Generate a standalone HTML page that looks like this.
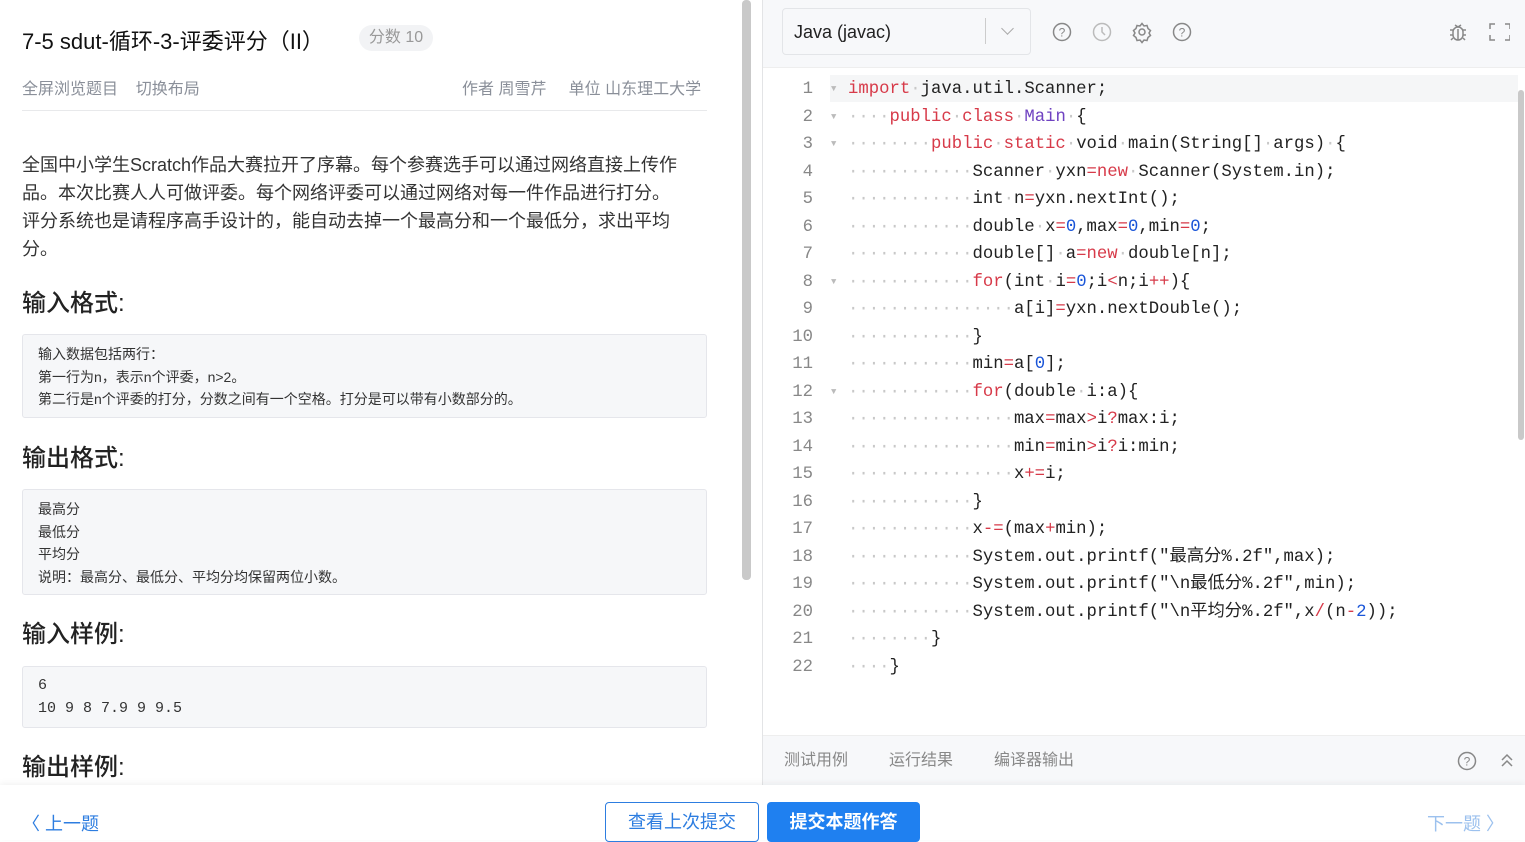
<!DOCTYPE html><html><head><meta charset="utf-8"><style>
*{margin:0;padding:0;box-sizing:border-box}
body{width:1525px;height:840px;overflow:hidden;font-family:"Liberation Sans","Noto Sans CJK SC",sans-serif;background:#fff;position:relative;color:#1f2329}
.abs{position:absolute}
.box{position:absolute;left:22px;width:685px;background:#f6f7f9;border:1px solid #e5e6eb;border-radius:3px;padding:8px 15px;font-size:14px;line-height:22.5px;color:#333}
h2{position:absolute;left:22px;font-size:24px;font-weight:500;color:#222}
.code{position:absolute;left:763px;top:76px;font-family:"Liberation Mono","Noto Sans CJK SC",monospace;font-size:17.3px}
.ln{position:absolute;width:50px;text-align:right;left:0;color:#888;height:27.5px;line-height:27.5px}
.cl{position:absolute;left:85px;white-space:pre;height:27.5px;line-height:27.5px;color:#222}
.d{color:#c8c8c8}.k{color:#d73a49}.m{color:#6f42c1}.n{color:#1a55d8}.o{color:#d73a49}
.ar{position:absolute;left:68px;color:#bbb;font-size:9px;line-height:27.5px}
</style></head><body>
<div class="abs" style="left:22px;top:24px;font-size:22px;color:#111">7-5 sdut-循环-3-评委评分（II）</div>
<div class="abs" style="left:359px;top:25px;width:74px;height:26px;border-radius:13px;background:#f2f3f5;color:#999;font-size:16px;line-height:26px;text-align:center">分数 10</div>
<div class="abs" style="left:22px;top:75px;font-size:16px;color:#8a8f99">全屏浏览题目&nbsp;&nbsp;&nbsp;&nbsp;切换布局</div>
<div class="abs" style="left:462px;top:75px;font-size:16px;color:#8a8f99">作者 周雪芹&nbsp;&nbsp;&nbsp;&nbsp;&nbsp;单位 山东理工大学</div>
<div class="abs" style="left:22px;top:110px;width:685px;height:1px;background:#e8e9eb"></div>
<div class="abs" style="left:22px;top:151px;width:700px;font-size:18px;line-height:28px;color:#333;white-space:nowrap">全国中小学生Scratch作品大赛拉开了序幕。每个参赛选手可以通过网络直接上传作<br>品。本次比赛人人可做评委。每个网络评委可以通过网络对每一件作品进行打分。<br>评分系统也是请程序高手设计的，能自动去掉一个最高分和一个最低分，求出平均<br>分。</div>
<h2 style="top:283px">输入格式:</h2>
<div class="box" style="top:334px;height:84px">输入数据包括两行：<br>第一行为n，表示n个评委，n&gt;2。<br>第二行是n个评委的打分，分数之间有一个空格。打分是可以带有小数部分的。</div>
<h2 style="top:438px">输出格式:</h2>
<div class="box" style="top:489px;height:106px">最高分<br>最低分<br>平均分<br>说明：最高分、最低分、平均分均保留两位小数。</div>
<h2 style="top:614px">输入样例:</h2>
<div class="box" style="top:666px;height:62px;font-family:'Liberation Mono',monospace;font-size:15px">6<br>10 9 8 7.9 9 9.5</div>
<h2 style="top:747px">输出样例:</h2>
<div class="abs" style="left:742px;top:0;width:9px;height:580px;background:#c9c9c9;border-radius:4px"></div>
<div class="abs" style="left:762px;top:0;width:1px;height:785px;background:#e3e4e6"></div>
<div class="abs" style="left:763px;top:0;width:762px;height:68px;background:#f7f8fa;border-bottom:1px solid #eee"></div>
<div class="abs" style="left:782px;top:8px;width:249px;height:47px;border:1px solid #e3e5e8;border-radius:4px;background:#f7f8fa;font-size:18px;line-height:47px;padding-left:11px;color:#222">Java (javac)</div>
<div class="abs" style="left:985px;top:18px;width:1px;height:26px;background:#ccc"></div>
<div class="abs" style="left:1003px;top:24px;width:9px;height:9px;border-right:1.5px solid #aaa;border-bottom:1.5px solid #aaa;transform:rotate(45deg)"></div>
<svg class="abs" style="left:1050px;top:20px" width="145" height="24" fill="none" stroke="#888" stroke-width="1.5">
<circle cx="12" cy="12" r="8.5"/><text x="12" y="16.5" font-size="12" fill="#888" stroke="none" text-anchor="middle" font-family="Liberation Sans">?</text>
<circle cx="52" cy="12" r="8.5" stroke="#bbb"/><path d="M52 7v5l3 3" stroke="#bbb"/>
<circle cx="92" cy="12" r="3"/><path d="M92 3.5l2 2.5 3-.5 1 3 2.5 2-1.5 2.5 1.5 2.5-2.5 2-1 3-3-.5-2 2.5-2-2.5-3 .5-1-3-2.5-2 1.5-2.5-1.5-2.5 2.5-2 1-3 3 .5z"/>
<circle cx="132" cy="12" r="8.5"/><text x="132" y="16.5" font-size="12" fill="#888" stroke="none" text-anchor="middle" font-family="Liberation Sans">?</text></svg>
<svg class="abs" style="left:1446px;top:20px" width="64" height="24" fill="none" stroke="#888" stroke-width="1.5">
<rect x="7" y="7" width="10" height="13" rx="5"/><path d="M9 5l3 2 3-2M4 10h3M17 10h3M4 15h3M17 15h3M12 9v11M5 20l2-2M19 20l-2-2"/>
<path d="M44 9V4h5M59 4h5v5M64 15v5h-5M49 20h-5v-5"/></svg>
<div class="abs" style="left:830px;top:75px;width:688px;height:27px;background:#f5f6f7"></div>
<div class="abs" style="left:1518px;top:90px;width:6px;height:350px;background:#c9c9c9;border-radius:3px"></div>
<div class="code">
<div class="ln" style="top:0">1</div><div class="ar" style="top:0">▼</div><div class="cl" style="top:0"><span class="k">import</span><span class="d">·</span>java.util.Scanner;</div>
<div class="ln" style="top:27.5px">2</div><div class="ar" style="top:27.5px">▼</div><div class="cl" style="top:27.5px"><span class="d">····</span><span class="k">public</span><span class="d">·</span><span class="k">class</span><span class="d">·</span><span class="m">Main</span><span class="d">·</span>{</div>
<div class="ln" style="top:55px">3</div><div class="ar" style="top:55px">▼</div><div class="cl" style="top:55px"><span class="d">········</span><span class="k">public</span><span class="d">·</span><span class="k">static</span><span class="d">·</span>void<span class="d">·</span>main(String[]<span class="d">·</span>args)<span class="d">·</span>{</div>
<div class="ln" style="top:82.5px">4</div><div class="cl" style="top:82.5px"><span class="d">············</span>Scanner<span class="d">·</span>yxn<span class="o">=</span><span class="k">new</span><span class="d">·</span>Scanner(System.in);</div>
<div class="ln" style="top:110px">5</div><div class="cl" style="top:110px"><span class="d">············</span>int<span class="d">·</span>n<span class="o">=</span>yxn.nextInt();</div>
<div class="ln" style="top:137.5px">6</div><div class="cl" style="top:137.5px"><span class="d">············</span>double<span class="d">·</span>x<span class="o">=</span><span class="n">0</span>,max<span class="o">=</span><span class="n">0</span>,min<span class="o">=</span><span class="n">0</span>;</div>
<div class="ln" style="top:165px">7</div><div class="cl" style="top:165px"><span class="d">············</span>double[]<span class="d">·</span>a<span class="o">=</span><span class="k">new</span><span class="d">·</span>double[n];</div>
<div class="ln" style="top:192.5px">8</div><div class="ar" style="top:192.5px">▼</div><div class="cl" style="top:192.5px"><span class="d">············</span><span class="k">for</span>(int<span class="d">·</span>i<span class="o">=</span><span class="n">0</span>;i<span class="o">&lt;</span>n;i<span class="o">++</span>){</div>
<div class="ln" style="top:220px">9</div><div class="cl" style="top:220px"><span class="d">················</span>a[i]<span class="o">=</span>yxn.nextDouble();</div>
<div class="ln" style="top:247.5px">10</div><div class="cl" style="top:247.5px"><span class="d">············</span>}</div>
<div class="ln" style="top:275px">11</div><div class="cl" style="top:275px"><span class="d">············</span>min<span class="o">=</span>a[<span class="n">0</span>];</div>
<div class="ln" style="top:302.5px">12</div><div class="ar" style="top:302.5px">▼</div><div class="cl" style="top:302.5px"><span class="d">············</span><span class="k">for</span>(double<span class="d">·</span>i:a){</div>
<div class="ln" style="top:330px">13</div><div class="cl" style="top:330px"><span class="d">················</span>max<span class="o">=</span>max<span class="o">&gt;</span>i<span class="o">?</span>max:i;</div>
<div class="ln" style="top:357.5px">14</div><div class="cl" style="top:357.5px"><span class="d">················</span>min<span class="o">=</span>min<span class="o">&gt;</span>i<span class="o">?</span>i:min;</div>
<div class="ln" style="top:385px">15</div><div class="cl" style="top:385px"><span class="d">················</span>x<span class="o">+=</span>i;</div>
<div class="ln" style="top:412.5px">16</div><div class="cl" style="top:412.5px"><span class="d">············</span>}</div>
<div class="ln" style="top:440px">17</div><div class="cl" style="top:440px"><span class="d">············</span>x<span class="o">-=</span>(max<span class="o">+</span>min);</div>
<div class="ln" style="top:467.5px">18</div><div class="cl" style="top:467.5px"><span class="d">············</span>System.out.printf("最高分%.2f",max);</div>
<div class="ln" style="top:495px">19</div><div class="cl" style="top:495px"><span class="d">············</span>System.out.printf("\n最低分%.2f",min);</div>
<div class="ln" style="top:522.5px">20</div><div class="cl" style="top:522.5px"><span class="d">············</span>System.out.printf("\n平均分%.2f",x<span class="o">/</span>(n<span class="o">-</span><span class="n">2</span>));</div>
<div class="ln" style="top:550px">21</div><div class="cl" style="top:550px"><span class="d">········</span>}</div>
<div class="ln" style="top:577.5px">22</div><div class="cl" style="top:577.5px"><span class="d">····</span>}</div>
</div>
<div class="abs" style="left:763px;top:735px;width:762px;height:50px;background:#f7f8fa;border-top:1px solid #eee;font-size:16px;color:#888;line-height:50px;padding-left:21px">测试用例<span style="margin-left:41px">运行结果</span><span style="margin-left:41px">编译器输出</span></div>
<svg class="abs" style="left:1456px;top:750px" width="60" height="22" fill="none" stroke="#888" stroke-width="1.5"><circle cx="11" cy="11" r="8.5"/><text x="11" y="15.5" font-size="12" fill="#888" stroke="none" text-anchor="middle" font-family="Liberation Sans">?</text><path d="M46 10l5-5 5 5M46 16l5-5 5 5"/></svg>
<div class="abs" style="left:0;top:785px;width:1525px;height:55px;background:#fff;box-shadow:0 -2px 6px rgba(0,0,0,.05)"></div>
<div class="abs" style="left:22px;top:810px;font-size:18px;color:#2d7de0">〈 上一题</div>
<div class="abs" style="left:1427px;top:810px;font-size:18px;color:#9cc1ee">下一题 〉</div>
<div class="abs" style="left:605px;top:802px;width:154px;height:40px;border:1px solid #2d7de0;border-radius:4px;color:#2d7de0;font-size:18px;line-height:38px;text-align:center">查看上次提交</div>
<div class="abs" style="left:767px;top:802px;width:153px;height:40px;background:#1f80f0;border-radius:4px;color:#fff;font-size:18px;line-height:40px;text-align:center;font-weight:bold">提交本题作答</div>
</body></html>
